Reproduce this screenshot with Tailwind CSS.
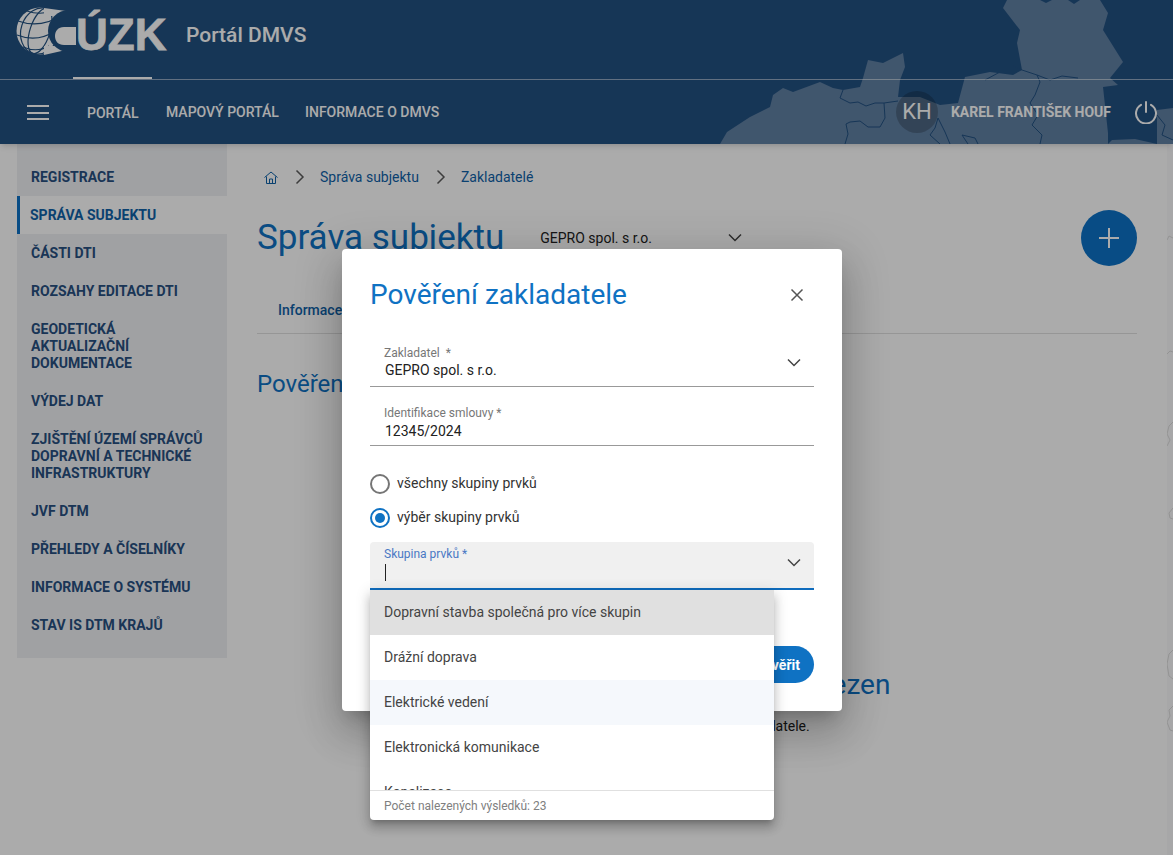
<!DOCTYPE html>
<html lang="cs">
<head>
    <meta charset="UTF-8">
    <meta name="viewport" content="width=device-width, initial-scale=1.0">
    <title>Portál DMVS</title>
    <script src="https://cdn.jsdelivr.net/npm/@tailwindcss/browser@4"></script>
</head>
<body class="bg-white font-['Roboto',sans-serif] text-sm overflow-hidden">
    <div class="relative w-[1173px] h-[855px] overflow-hidden">
        <!-- faint map behind the page, only its edge shows -->
        <div class="absolute right-0 top-[144px] w-[6px] h-[711px] bg-[#f9f9fb]"></div>
        <svg class="absolute left-[1167px] top-0" width="6" height="855" viewBox="0 0 6 855" fill="none" stroke="#dcdcdc" stroke-width="1">
            <path d="M0 240L2 236L6 238M0 354L3 351L6 352M6 422L2 426L0 434L3 440L0 446M6 508L2 513L3 518L6 519M6 650L2 654L0 664L2 676L6 679M6 706L2 710L3 716L0 722L3 730L6 731"/>
        </svg>

        <!-- header -->
        <header class="relative h-[144px] bg-[#225181] text-white overflow-hidden shadow-md z-10">
            <svg class="absolute inset-0" width="1173" height="144" viewBox="0 0 1173 144">
                <path fill="#6080a3" d="M720 144L727 132L750 117L770 107L773 95L783 88L793 92L820 82L833 88L843 90L860 87L863 78L868 60L883 63L903 53L905 67L900 80L898 97L920 97L940 105L958 103L965 77L990 72L1013 75L1022 70L1017 43L1020 30L1003 8L1007 0L1100 0L1108 13L1103 30L1123 62L1110 78L1118 85L1103 87L1108 133L1108 144L1112 140L1135 139L1157 144L1157 110L1173 108L1173 144Z"/>
                <path fill="#225181" d="M1040 0L1046 3L1052 0ZM1068 0L1074 4L1080 0Z"/>
                <g fill="none" stroke="#225181" stroke-width="1">
                    <path d="M843 90L840 98L850 103L858 102L866 106L875 103L884 103L898 101"/>
                    <path d="M884 103L885 118L880 127L868 127L860 121L850 122L846 124L848 134L845 144"/>
                    <path d="M938 118L935 128L930 135L940 144M938 118L945 132L950 144M962 135L968 144M962 135L975 138L978 144"/>
                    <path d="M1037 75L1040 82L1035 95L1030 103L1038 115L1032 125L1042 135L1040 144"/>
                    <path d="M1037 75L1022 70L1012 65L1000 72L985 80M1037 75L1050 80L1062 76L1078 78"/>
                    <path d="M1157 115L1165 125L1162 135L1173 140"/>
                </g>
            </svg>
            <div class="relative h-[80px] border-b border-white/50 flex items-center pl-[17px] pb-[10px]">
                <div class="relative w-[150px] h-[62px]">
                    <svg class="absolute -left-[17px] -top-[4px]" width="76" height="62" viewBox="0 0 76 62">
                        <circle cx="40" cy="31" r="23.5" fill="#fff"/>
                        <g fill="none" stroke="#225181" stroke-width="1.2">
                            <ellipse cx="40" cy="31" rx="10" ry="23.5" transform="rotate(18 40 31)"/>
                            <ellipse cx="40" cy="31" rx="19" ry="23.5" transform="rotate(18 40 31)"/>
                            <path d="M18 21Q40 29 63 15M17 35Q37 43 55 31M23 47Q37 53 49 46M27 11Q41 16 55 10"/>
                        </g>
                        <path fill="#fff" d="M44 8L66 11L62 16L44 16ZM44 46L62 46L66 50L44 55Z"/>
                        <circle cx="69" cy="31" r="21" fill="#225181"/>
                        <path fill="#fff" d="M76 27L64 27C58 27 55 31 55 36C55 41 58 45 64 45L76 45Z"/>
                    </svg>
                    <span class="absolute left-[59px] top-[6px] font-['Liberation_Sans',sans-serif] font-bold text-[44px] leading-[50px] [-webkit-text-stroke:0.8px_#fff]">ÚZK</span>
                </div>
                <span class="ml-[19px] text-[21px] font-medium">Portál DMVS</span>
            </div>
            <nav class="relative h-[64px] flex items-center">
                <button class="ml-[27px] w-[22px] flex flex-col gap-[4.5px] mt-[1px]">
                    <span class="block h-[2px] bg-white"></span>
                    <span class="block h-[2px] bg-white"></span>
                    <span class="block h-[2px] bg-white"></span>
                </button>
                <div class="ml-[24px] flex h-full font-medium uppercase">
                    <a class="w-[79px] pl-[14px] flex items-center -mt-[2px] pt-[3px] border-t-2 border-white -translate-y-px h-[66px]">Portál</a>
                    <a class="w-[139px] pl-[14px] flex items-center -mt-[2px] h-[66px] pt-[2px]">Mapový portál</a>
                    <a class="pl-[14px] flex items-center -mt-[2px] h-[66px] pt-[2px]">Informace o DMVS</a>
                </div>
                <div class="ml-auto flex items-center">
                    <span class="w-[42px] h-[42px] rounded-full bg-black/20 flex items-center justify-center text-[22px]">KH</span>
                    <span class="ml-[13px] font-bold uppercase">Karel František Houf</span>
                    <svg class="ml-[23px] mr-[15px]" width="24" height="24" viewBox="0 0 24 24" fill="none" stroke="currentColor" stroke-width="2" stroke-linecap="round">
                        <path d="M12 2V12"/>
                        <path d="M7 4.8A10 10 0 1 0 17 4.8"/>
                    </svg>
                </div>
            </nav>
        </header>

        <div class="relative flex h-[711px]">
            <!-- sidebar -->
            <aside class="ml-[17px] w-[210px] self-start bg-[#eff1f4] py-[14px] font-bold uppercase leading-[17px] text-[#284f80]">
                <a class="block px-[14px] py-[10.5px]">Registrace</a>
                <a class="block pl-[10px] pr-[14px] py-[10.5px] bg-white border-l-[3px] border-[#0c72c6] text-[#0f62a8]">Správa subjektu</a>
                <a class="block px-[14px] py-[10.5px]">Části DTI</a>
                <a class="block px-[14px] py-[10.5px]">Rozsahy editace DTI</a>
                <a class="block px-[14px] py-[10.5px]">Geodetická aktualizační dokumentace</a>
                <a class="block px-[14px] py-[10.5px]">Výdej dat</a>
                <a class="block px-[14px] py-[10.5px]">Zjištění území správců dopravní a technické infrastruktury</a>
                <a class="block px-[14px] py-[10.5px]">JVF DTM</a>
                <a class="block px-[14px] py-[10.5px]">Přehledy a číselníky</a>
                <a class="block px-[14px] py-[10.5px]">Informace o systému</a>
                <a class="block px-[14px] py-[10.5px]">Stav IS DTM krajů</a>
            </aside>

            <!-- main -->
            <main class="flex-1 pl-[30px] pr-[36px]">
                <div class="mt-[22px] h-[22px] flex items-center text-[#0f62a8]">
                    <svg class="ml-[7px]" width="14" height="13" viewBox="0 0 14 13" fill="none" stroke="#0f62a8" stroke-width="1">
                        <path d="M0.5 6.5L7 1L13.5 6.5M2.5 5.5V12.5H11.5V5.5M5.5 12.5V8H8.5V12.5"/>
                    </svg>
                    <svg class="ml-[17px]" width="10" height="16" viewBox="0 0 10 16" fill="none" stroke="#5c5c5c" stroke-width="1.5"><path d="M1.5 1.5L8 8L1.5 14.5"/></svg>
                    <span class="ml-[15px]">Správa subjektu</span>
                    <svg class="ml-[17px]" width="10" height="16" viewBox="0 0 10 16" fill="none" stroke="#5c5c5c" stroke-width="1.5"><path d="M1.5 1.5L8 8L1.5 14.5"/></svg>
                    <span class="ml-[15px]">Zakladatelé</span>
                </div>
                <div class="mt-[22px] h-[56px] flex items-center">
                    <h1 class="text-[35px] leading-[44px] text-[#0f72c3]">Správa subjektu</h1>
                    <span class="ml-[36px] w-[187px] text-[#222]">GEPRO spol. s r.o.</span>
                    <svg width="16" height="10" viewBox="0 0 16 10" fill="none" stroke="#444" stroke-width="1.5"><path d="M2 1.5L8 7.5L14 1.5"/></svg>
                    <button class="ml-auto w-[56px] h-[56px] rounded-full bg-[#0c72c6] flex items-center justify-center">
                        <svg width="22" height="22" viewBox="0 0 22 22" fill="none" stroke="#fff" stroke-width="2"><path d="M11 1V21M1 11H21"/></svg>
                    </button>
                </div>
                <div class="mt-[27px] h-[41px] border-b border-[#e0e0e0] pl-[21px] pt-[7px] font-medium text-[#0f62a8]">Informace</div>
                <h2 class="mt-[36px] text-2xl leading-[28px] text-[#0f72c3]">Pověření zakladatele</h2>
                <div class="mt-[269px] text-center">
                    <p class="text-[28px] leading-[36px] text-[#0f72c3]">Žádný zakladatel nebyl nalezen</p>
                    <p class="mt-[13px] pr-[4px] text-[#222]">Nebyl pověřen žádný typ zakladatele.</p>
                </div>
            </main>
        </div>

        <!-- dialog backdrop -->
        <div class="absolute inset-0 bg-black/33 z-20"></div>

        <!-- dialog -->
        <div class="absolute z-30 left-[342px] top-[249px] w-[500px] bg-white rounded-[4px] px-[28px] pt-[28px] pb-[28px] shadow-[0_11px_15px_-7px_rgba(0,0,0,.2),0_24px_38px_3px_rgba(0,0,0,.14),0_9px_46px_8px_rgba(0,0,0,.12)]">
            <div class="h-[36px] flex items-center justify-between">
                <h2 class="text-[28px] leading-[36px] text-[#0f72c3]">Pověření zakladatele</h2>
                <svg class="mr-[10px]" width="14" height="14" viewBox="0 0 14 14" fill="none" stroke="#555" stroke-width="1.5"><path d="M1.5 1.5L12.5 12.5M12.5 1.5L1.5 12.5"/></svg>
            </div>
            <div class="mt-[30px] relative h-[44px] border-b border-[#999] pl-[14px] pt-[3px]">
                <div class="text-xs leading-[14px] text-[#777]">Zakladatel &nbsp;*</div>
                <div class="pl-px mt-[1px] leading-[18px] text-[#222]">GEPRO spol. s r.o.</div>
                <svg class="absolute right-[12px] top-[15px]" width="16" height="10" viewBox="0 0 16 10" fill="none" stroke="#444" stroke-width="1.5"><path d="M2 1.5L8 7.5L14 1.5"/></svg>
            </div>
            <div class="mt-[16px] h-[43px] border-b border-[#999] pl-[14px] pt-[3px]">
                <div class="text-xs leading-[14px] text-[#777]">Identifikace smlouvy *</div>
                <div class="pl-px mt-[2px] leading-[18px] text-[#222]">12345/2024</div>
            </div>
            <label class="mt-[28px] h-[20px] flex items-center text-[#333]">
                <span class="w-[20px] h-[20px] rounded-full border-2 border-[#757575]"></span>
                <span class="ml-[7px] -mt-[2px]">všechny skupiny prvků</span>
            </label>
            <label class="mt-[14px] h-[20px] flex items-center text-[#333]">
                <span class="w-[20px] h-[20px] rounded-full border-2 border-[#0f72c3] flex items-center justify-center">
                    <span class="w-[10px] h-[10px] rounded-full bg-[#0f72c3]"></span>
                </span>
                <span class="ml-[7px] -mt-[2px]">výběr skupiny prvků</span>
            </label>
            <div class="mt-[14px] relative h-[48px] bg-[#f0f0f0] rounded-t-[4px] border-b-2 border-[#0f6cbd] pl-[14px] pt-[5px]">
                <div class="text-xs leading-[14px] text-[#4a78c4]">Skupina prvků *</div>
                <div class="ml-px mt-[3px] w-px h-[17px] bg-[#222]"></div>
                <svg class="absolute right-[12px] top-[16px]" width="16" height="10" viewBox="0 0 16 10" fill="none" stroke="#444" stroke-width="1.5"><path d="M2 1.5L8 7.5L14 1.5"/></svg>
            </div>
            <div class="mt-[56px] flex justify-end gap-4">
                <button class="h-[37px] px-[14px] rounded-full bg-[#0f72c3] text-white text-sm font-bold">Pověřit</button>
            </div>

            <!-- dropdown panel -->
            <div class="absolute left-[28px] top-[341px] w-[404px] bg-white rounded-b-[4px] overflow-hidden shadow-[0_5px_5px_-3px_rgba(0,0,0,.2),0_8px_10px_1px_rgba(0,0,0,.14),0_3px_14px_2px_rgba(0,0,0,.12)] text-[#444]">
                <div class="h-[200px] overflow-hidden">
                    <div class="h-[45px] flex items-center px-[14px] pb-[2px] bg-[#e0e0e0]">Dopravní stavba společná pro více skupin</div>
                    <div class="h-[45px] flex items-center px-[14px] pb-[2px]">Drážní doprava</div>
                    <div class="h-[45px] flex items-center px-[14px] pb-[2px] bg-[#f5f8fc]">Elektrické vedení</div>
                    <div class="h-[45px] flex items-center px-[14px] pb-[2px]">Elektronická komunikace</div>
                    <div class="h-[45px] flex items-center px-[14px] pb-[2px]">Kanalizace</div>
                </div>
                <div class="h-[30px] border-t border-[#e0e0e0] flex items-center px-[14px] text-xs text-[#808080]">Počet nalezených výsledků: 23</div>
            </div>
        </div>
    </div>
</body>
</html>
